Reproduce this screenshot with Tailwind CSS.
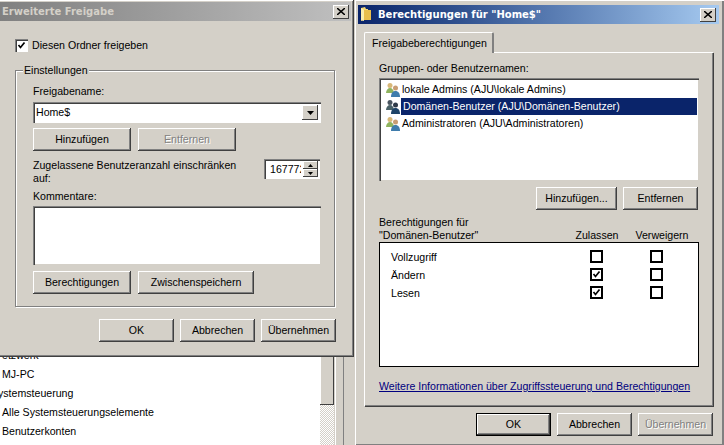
<!DOCTYPE html>
<html lang="de">
<head>
<meta charset="UTF-8">
<title>Erweiterte Freigabe</title>
<script src="https://cdn.jsdelivr.net/npm/@tailwindcss/browser@4"></script>
</head>
<body class="bg-[#d4d0c8]">
<div class="relative w-[724px] h-[445px] overflow-hidden bg-[#d4d0c8] font-['Liberation_Sans',sans-serif] text-[10.6px] leading-[13px] text-black">

  <!-- Explorer-Baum hinter den Fenstern -->
  <div class="absolute left-0 top-[340px] w-[320px] h-[105px] bg-white">
    <p class="absolute left-[2px] top-[9px]">etzwerk</p>
    <p class="absolute left-[2px] top-[28px]">MJ-PC</p>
    <p class="absolute left-[-2px] top-[47px]">ystemsteuerung</p>
    <p class="absolute left-[2px] top-[66px]">Alle Systemsteuerungselemente</p>
    <p class="absolute left-[2px] top-[85px]">Benutzerkonten</p>
  </div>
  <div class="absolute left-[320px] top-[340px] w-[14px] h-[105px] bg-[repeating-conic-gradient(#d4d0c8_0_25%,#fff_0_50%)] bg-[length:2px_2px]">
    <div class="h-[65px] bg-[#d4d0c8] shadow-[inset_-1px_-1px_0_#404040,inset_1px_1px_0_#fff]"></div>
  </div>
  <div class="absolute left-[335px] top-[340px] w-px h-[105px] bg-white"></div>
  <div class="absolute left-[343px] top-[340px] w-px h-[105px] bg-[#808080]"></div>

  <!-- Fenster: Erweiterte Freigabe -->
  <div class="absolute left-0 top-0 w-[354px] h-[357px] bg-[#d4d0c8] pt-[2px] shadow-[inset_-1px_-1px_0_#404040,inset_0_1px_0_#fff,inset_-2px_-2px_0_#808080]">
    <div class="flex items-center justify-between h-[19px] mr-[3px] pl-[2px] pr-[2px] bg-gradient-to-r from-[#808080] to-[#c0c0c0]">
      <span class="font-['DejaVu_Sans',sans-serif] text-[10px] font-bold text-[#d4d0c8]">Erweiterte Freigabe</span>
      <span class="flex items-center justify-center w-[16px] h-[14px] bg-[#d4d0c8] shadow-[inset_-1px_-1px_0_#404040,inset_1px_1px_0_#fff]">
        <svg width="8" height="7" viewBox="0 0 8 7"><path d="M0 0l8 7M8 0L0 7" stroke="#000" stroke-width="1.5"/></svg>
      </span>
    </div>

    <label class="flex items-center gap-[4px] ml-[15px] mt-[18px] h-[13px]">
      <span class="flex items-center justify-center w-[13px] h-[13px] bg-white shadow-[inset_1px_1px_0_#808080,inset_2px_2px_0_#404040,inset_-1px_-1px_0_#fff]">
        <svg width="9" height="9" viewBox="0 0 9 9"><path d="M1.500 4l2 2.500 4-5" fill="none" stroke="#000" stroke-width="1.700"/></svg>
      </span>
      Diesen Ordner freigeben
    </label>

    <div class="relative ml-[15px] mt-[18px] w-[320px] h-[237px] pl-[17px] pt-[14px] border border-[#808080] shadow-[1px_1px_0_#fff,inset_1px_1px_0_#fff]">
      <span class="absolute left-[7px] top-[-7px] px-px bg-[#d4d0c8]">Einstellungen</span>
      <p class="h-[13px]">Freigabename:</p>

      <div class="flex items-center justify-between mt-[4px] w-[288px] h-[21px] pl-[3px] pr-[3px] bg-white shadow-[inset_1px_1px_0_#808080,inset_2px_2px_0_#404040,inset_-1px_-1px_0_#fff]">
        <span>Home$</span>
        <span class="flex items-center justify-center w-[16px] h-[15px] bg-[#d4d0c8] shadow-[inset_-1px_-1px_0_#404040,inset_1px_1px_0_#fff]">
          <svg width="7" height="4" viewBox="0 0 7 4"><path d="M0 0h7L3.500 4z" fill="#000"/></svg>
        </span>
      </div>

      <div class="flex gap-[7px] mt-[5px]">
        <button class="w-[98px] h-[23px] bg-[#d4d0c8] shadow-[inset_-1px_-1px_0_#404040,inset_1px_1px_0_#fff,inset_-2px_-2px_0_#808080]">Hinzufügen</button>
        <button class="w-[98px] h-[23px] bg-[#d4d0c8] text-[#808080] [text-shadow:1px_1px_0_#fff] shadow-[inset_-1px_-1px_0_#404040,inset_1px_1px_0_#fff,inset_-2px_-2px_0_#808080]">Entfernen</button>
      </div>

      <div class="flex justify-between mt-[8px] w-[287px]">
        <p class="w-[215px]">Zugelassene Benutzeranzahl einschränken auf:</p>
        <div class="flex items-center justify-between w-[56px] h-[20px] pl-[6px] pr-[2px] bg-white shadow-[inset_1px_1px_0_#808080,inset_2px_2px_0_#404040,inset_-1px_-1px_0_#fff]">
          <span class="w-[31px] overflow-hidden whitespace-nowrap">16777215</span>
          <span class="flex flex-col w-[15px]">
            <span class="flex items-center justify-center h-[8px] bg-[#d4d0c8] shadow-[inset_-1px_-1px_0_#404040,inset_1px_1px_0_#fff]"><svg width="5" height="3" viewBox="0 0 5 3"><path d="M2.500 0L5 3H0z" fill="#000"/></svg></span>
            <span class="flex items-center justify-center h-[8px] bg-[#d4d0c8] shadow-[inset_-1px_-1px_0_#404040,inset_1px_1px_0_#fff]"><svg width="5" height="3" viewBox="0 0 5 3"><path d="M0 0h5L2.500 3z" fill="#000"/></svg></span>
          </span>
        </div>
      </div>

      <p class="mt-[5px] h-[13px]">Kommentare:</p>
      <div class="mt-[3px] w-[288px] h-[59px] bg-white shadow-[inset_1px_1px_0_#808080,inset_2px_2px_0_#404040,inset_-1px_-1px_0_#d4d0c8]"></div>

      <div class="flex gap-[7px] mt-[6px]">
        <button class="w-[98px] h-[23px] bg-[#d4d0c8] shadow-[inset_-1px_-1px_0_#404040,inset_1px_1px_0_#fff,inset_-2px_-2px_0_#808080]">Berechtigungen</button>
        <button class="w-[116px] h-[23px] bg-[#d4d0c8] shadow-[inset_-1px_-1px_0_#404040,inset_1px_1px_0_#fff,inset_-2px_-2px_0_#808080]">Zwischenspeichern</button>
      </div>
    </div>

    <div class="flex justify-end gap-[6px] mt-[12px] w-[336px]">
      <button class="w-[75px] h-[23px] bg-[#d4d0c8] shadow-[inset_-1px_-1px_0_#404040,inset_1px_1px_0_#fff,inset_-2px_-2px_0_#808080]">OK</button>
      <button class="w-[75px] h-[23px] bg-[#d4d0c8] shadow-[inset_-1px_-1px_0_#404040,inset_1px_1px_0_#fff,inset_-2px_-2px_0_#808080]">Abbrechen</button>
      <button class="w-[75px] h-[23px] bg-[#d4d0c8] shadow-[inset_-1px_-1px_0_#404040,inset_1px_1px_0_#fff,inset_-2px_-2px_0_#808080]">Übernehmen</button>
    </div>
  </div>

  <!-- Fenster: Berechtigungen -->
  <div class="absolute left-[354px] top-0 w-[370px] h-[445px] bg-[#d4d0c8] pt-[5px] pl-[4px] shadow-[inset_1px_0_0_#d4d0c8,inset_2px_0_0_#fff,inset_0_1px_0_#fff,inset_-2px_-1px_0_#808080]">
    <div class="flex items-center w-[361px] h-[19px] pl-[3px] pr-[3px] bg-gradient-to-r from-[#0a246a] to-[#a6caf0]">
      <svg width="12" height="15" viewBox="0 0 12 15"><path d="M0 1l4-1 1 2h2v11H3l-3 1z" fill="#f2d675"/><path d="M3 3h7v10H3z" fill="#e9bf4e"/><path d="M0 1l3 2v11l-3-1z" fill="#fbeeb0"/></svg>
      <span class="ml-[5px] font-['DejaVu_Sans',sans-serif] text-[10px] font-bold text-white">Berechtigungen für "Home$"</span>
      <span class="ml-auto flex items-center justify-center w-[16px] h-[14px] bg-[#d4d0c8] shadow-[inset_-1px_-1px_0_#404040,inset_1px_1px_0_#fff]">
        <svg width="8" height="7" viewBox="0 0 8 7"><path d="M0 0l8 7M8 0L0 7" stroke="#000" stroke-width="1.5"/></svg>
      </span>
    </div>

    <div class="relative z-10 ml-[6px] mt-[8px] w-[130px] h-[21px] flex items-center pl-[7px] bg-[#d4d0c8] rounded-t-[2px] border-t border-l border-white border-r-2 border-r-[#808080]">Freigabeberechtigungen</div>

    <div class="ml-[6px] mt-[-1px] w-[349px] h-[354px] pl-[14px] pt-[9px] border-l border-t border-white shadow-[inset_-1px_-1px_0_#808080,1px_1px_0_#404040]">
      <p class="h-[13px]">Gruppen- oder Benutzernamen:</p>
      <div class="flex flex-col mt-[3px] w-[320px] h-[103px] pt-[3px] pl-[6px] pr-[2px] bg-white shadow-[inset_1px_1px_0_#808080,inset_2px_2px_0_#404040,inset_-1px_-1px_0_#d4d0c8]">
        <div class="flex items-center h-[17px]">
          <svg class="shrink-0" width="16" height="15" viewBox="0 0 16 15"><circle cx="5" cy="3.500" r="2.500" fill="#d8b878"/><path d="M1 11c0-3 2-5 4-5s4 2 4 5z" fill="#8fb35e"/><circle cx="10.500" cy="6" r="2.500" fill="#c99d73"/><path d="M6 15c0-4 2-6 4.500-6s4.500 2 4.500 6z" fill="#3f7cac"/></svg>
          <span class="pl-px">lokale Admins (AJU\lokale Admins)</span>
        </div>
        <div class="flex items-center h-[17px]">
          <svg class="shrink-0" width="16" height="15" viewBox="0 0 16 15"><circle cx="5" cy="3.500" r="2.500" fill="#4a5560"/><path d="M1 11c0-3 2-5 4-5s4 2 4 5z" fill="#4a6268"/><circle cx="10.500" cy="6" r="2.500" fill="#2f3a48"/><path d="M6 15c0-4 2-6 4.500-6s4.500 2 4.500 6z" fill="#1f4468"/></svg>
          <span class="flex-1 h-[17px] flex items-center pl-[2px] bg-[#0a246a] text-white">Domänen-Benutzer (AJU\Domänen-Benutzer)</span>
        </div>
        <div class="flex items-center h-[17px]">
          <svg class="shrink-0" width="16" height="15" viewBox="0 0 16 15"><circle cx="5" cy="3.500" r="2.500" fill="#d8b878"/><path d="M1 11c0-3 2-5 4-5s4 2 4 5z" fill="#8fb35e"/><circle cx="10.500" cy="6" r="2.500" fill="#c99d73"/><path d="M6 15c0-4 2-6 4.500-6s4.500 2 4.500 6z" fill="#3f7cac"/></svg>
          <span class="pl-px">Administratoren (AJU\Administratoren)</span>
        </div>
      </div>

      <div class="flex justify-end gap-[6px] mt-[6px] w-[319px]">
        <button class="w-[81px] h-[23px] bg-[#d4d0c8] shadow-[inset_-1px_-1px_0_#404040,inset_1px_1px_0_#fff,inset_-2px_-2px_0_#808080]">Hinzufügen...</button>
        <button class="w-[75px] h-[23px] bg-[#d4d0c8] shadow-[inset_-1px_-1px_0_#404040,inset_1px_1px_0_#fff,inset_-2px_-2px_0_#808080]">Entfernen</button>
      </div>

      <div class="flex items-end mt-[5px] w-[320px] h-[27px]">
        <p class="w-[186px]">Berechtigungen für<br>"Domänen-Benutzer"</p>
        <span class="w-[64px] text-center">Zulassen</span>
        <span class="w-[66px] text-center">Verweigern</span>
      </div>

      <div class="w-[320px] h-[125px] pt-[4px] pl-[11px] bg-white border border-black">
        <div class="flex items-center h-[18px]">
          <span class="w-[199px] pt-[2px]">Vollzugriff</span>
          <span class="w-[60px]"><span class="block w-[13px] h-[13px] border-2 border-black"></span></span>
          <span class="block w-[13px] h-[13px] border-2 border-black"></span>
        </div>
        <div class="flex items-center h-[18px]">
          <span class="w-[199px] pt-[2px]">Ändern</span>
          <span class="w-[60px]"><span class="flex items-center justify-center w-[13px] h-[13px] border-2 border-black"><svg width="9" height="9" viewBox="0 0 9 9"><path d="M1.500 4l2 2.500 4-5" fill="none" stroke="#000" stroke-width="1.700"/></svg></span></span>
          <span class="block w-[13px] h-[13px] border-2 border-black"></span>
        </div>
        <div class="flex items-center h-[18px]">
          <span class="w-[199px] pt-[2px]">Lesen</span>
          <span class="w-[60px]"><span class="flex items-center justify-center w-[13px] h-[13px] border-2 border-black"><svg width="9" height="9" viewBox="0 0 9 9"><path d="M1.500 4l2 2.500 4-5" fill="none" stroke="#000" stroke-width="1.700"/></svg></span></span>
          <span class="block w-[13px] h-[13px] border-2 border-black"></span>
        </div>
      </div>

      <a href="#" class="block mt-[13px] text-[#00007f] underline whitespace-nowrap">Weitere Informationen über Zugriffssteuerung und Berechtigungen</a>
    </div>

    <div class="flex gap-[6px] ml-[118px] mt-[7px]">
      <button class="w-[75px] h-[23px] bg-[#d4d0c8] border border-black shadow-[inset_-1px_-1px_0_#404040,inset_1px_1px_0_#fff,inset_-2px_-2px_0_#808080]">OK</button>
      <button class="w-[75px] h-[23px] bg-[#d4d0c8] shadow-[inset_-1px_-1px_0_#404040,inset_1px_1px_0_#fff,inset_-2px_-2px_0_#808080]">Abbrechen</button>
      <button class="w-[75px] h-[23px] bg-[#d4d0c8] text-[#808080] [text-shadow:1px_1px_0_#fff] shadow-[inset_-1px_-1px_0_#404040,inset_1px_1px_0_#fff,inset_-2px_-2px_0_#808080]">Übernehmen</button>
    </div>
  </div>
</div>
</body>
</html>
